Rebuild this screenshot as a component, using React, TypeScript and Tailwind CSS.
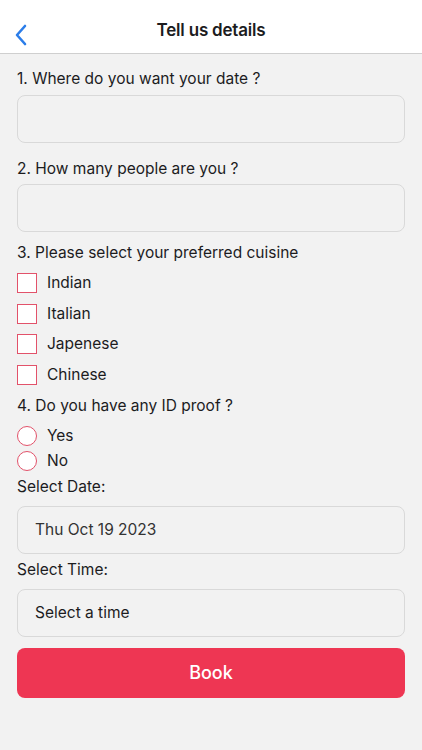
import React, { useState } from 'react';

const cuisines = ['Indian', 'Italian', 'Japenese', 'Chinese'];

export default function App() {
  const [picked, setPicked] = useState<string[]>([]);
  const [idProof, setIdProof] = useState<string | null>(null);

  const toggle = (c: string) =>
    setPicked((p) => (p.includes(c) ? p.filter((x) => x !== c) : [...p, c]));

  return (
    <div
      className="min-h-[750px] w-full bg-[#f2f2f2] text-[#1c1c1e]"
      style={{ fontFamily: 'Inter, "Noto Sans", sans-serif' }}
    >
      {/* Header */}
      <div className="relative flex h-[54px] items-center justify-center border-b border-[#cfcfcf] bg-white">
        <button className="absolute left-[10px] top-[20px] p-1">
          <svg width="14" height="22" viewBox="0 0 14 22" fill="none">
            <path d="M11 2L3 11l8 9" stroke="#2b7de9" strokeWidth="2.6" strokeLinecap="round" strokeLinejoin="round" />
          </svg>
        </button>
        <h1 className="pt-[9px] text-[17px] font-semibold tracking-[-0.2px]">Tell us details</h1>
      </div>

      <div className="px-[17px] text-[15.5px]">
        <p className="mt-[15px] leading-[20px]">1. Where do you want your date ?</p>
        <input className="mt-[6px] block h-[48px] w-full rounded-[8px] border border-[#d9d9d9] bg-[#f2f2f2] px-4 outline-none" />

        <p className="mt-[16px] leading-[20px]">2. How many people are you ?</p>
        <input className="mt-[5px] block h-[48px] w-full rounded-[8px] border border-[#d9d9d9] bg-[#f2f2f2] px-4 outline-none" />

        <p className="mt-[11px] leading-[20px]">3. Please select your preferred cuisine</p>
        <div className="mt-[10px] flex flex-col gap-[10.5px]">
          {cuisines.map((c) => (
            <label key={c} className="flex h-[20px] items-center gap-[10px]" onClick={() => toggle(c)}>
              <span className="flex h-[20px] w-[20px] items-center justify-center border-[1.5px] border-[#e2526a] bg-white">
                {picked.includes(c) && <span className="h-[10px] w-[10px] bg-[#e2526a]" />}
              </span>
              <span className="leading-[20px]">{c}</span>
            </label>
          ))}
        </div>

        <p className="mt-[11px] leading-[20px]">4. Do you have any ID proof ?</p>
        <div className="mt-[10px] flex flex-col gap-[5px]">
          {['Yes', 'No'].map((o) => (
            <label key={o} className="flex h-[20px] items-center gap-[10px]" onClick={() => setIdProof(o)}>
              <span className="flex h-[20px] w-[20px] items-center justify-center rounded-full border-[1.5px] border-[#e2526a] bg-white">
                {idProof === o && <span className="h-[10px] w-[10px] rounded-full bg-[#e2526a]" />}
              </span>
              <span className="leading-[20px]">{o}</span>
            </label>
          ))}
        </div>

        <p className="mt-[6px] leading-[20px]">Select Date:</p>
        <div className="mt-[9px] flex h-[48px] items-center rounded-[8px] border border-[#d9d9d9] px-[17px] text-[#333333]">
          Thu Oct 19 2023
        </div>

        <p className="mt-[6px] leading-[20px]">Select Time:</p>
        <div className="mt-[9px] flex h-[48px] items-center rounded-[8px] border border-[#d9d9d9] px-[17px] text-[#1c1c1e]">
          Select a time
        </div>

        <button className="mt-[11px] flex h-[50px] w-full items-center justify-center rounded-[8px] bg-[#ee3653] text-[18px] font-medium text-white">
          Book
        </button>
      </div>
    </div>
  );
}
